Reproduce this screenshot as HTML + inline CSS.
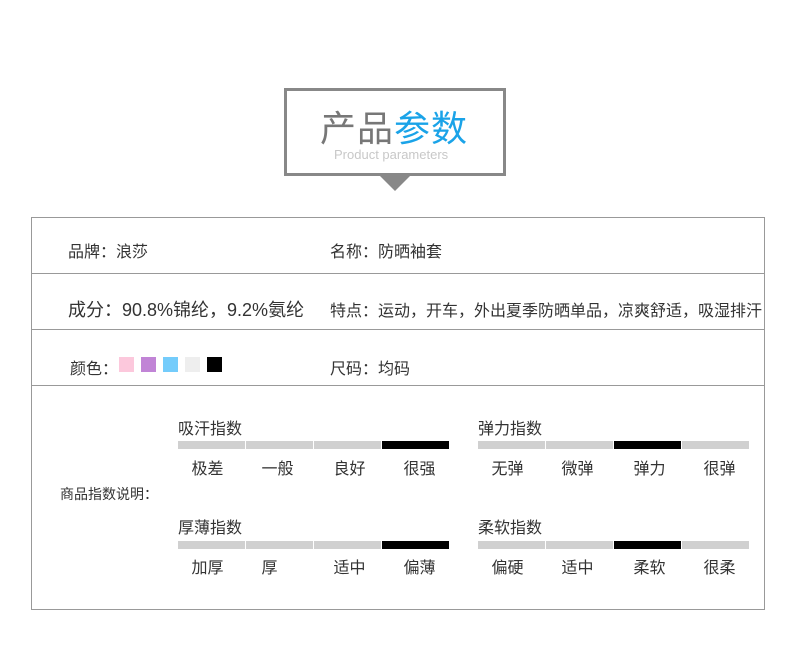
<!DOCTYPE html><html><head><meta charset="utf-8"><style>
*{margin:0;padding:0;box-sizing:border-box}
body{width:790px;height:651px;background:#fff;position:relative;font-family:"Liberation Sans","Noto Sans CJK SC",sans-serif;color:#333;overflow:hidden}
.a{position:absolute;white-space:nowrap}
.box{position:absolute;left:284px;top:88px;width:222px;height:88px;border:3px solid #888}
.tri{position:absolute;left:379px;top:175px;width:0;height:0;border-left:16px solid transparent;border-right:16px solid transparent;border-top:16px solid #888}
.tbl{position:absolute;left:31px;top:217px;width:734px;height:393px;border:1px solid #999}
.hl{position:absolute;left:31px;width:734px;height:1px;background:#999}
.t{font-size:16px}
.sw{position:absolute;top:357px;width:15px;height:15px}
.bar{position:absolute;height:8px;width:67px;background:#d0d0d0}
.lb{position:absolute;width:67px;text-align:center;font-size:16px}
</style></head><body>
<div class="box"></div>
<div class="a" style="left:320px;top:100px;font-size:36px;color:#777;letter-spacing:1px">产品<span style="color:#1aa3e8">参数</span></div>
<div class="a" style="left:334px;top:147px;font-size:13px;color:#c8c8c8">Product parameters</div>
<div class="tri"></div>
<div class="tbl"></div>
<div class="hl" style="top:273px"></div><div class="hl" style="top:329px"></div><div class="hl" style="top:385px"></div>
<div class="a t" style="left:68px;top:238px">品牌：浪莎</div>
<div class="a t" style="left:330px;top:238px">名称：防晒袖套</div>
<div class="a" style="left:68px;top:296px;font-size:18px">成分：90.8%锦纶，9.2%氨纶</div>
<div class="a t" style="left:330px;top:297px">特点：运动，开车，外出夏季防晒单品，凉爽舒适，吸湿排汗</div>
<div class="a t" style="left:70px;top:355px">颜色：</div>
<div class="sw" style="left:119px;background:#fcc8dc"></div>
<div class="sw" style="left:141px;background:#c184d6"></div>
<div class="sw" style="left:163px;background:#74ccfb"></div>
<div class="sw" style="left:185px;background:#eeeeee"></div>
<div class="sw" style="left:207px;background:#000"></div>
<div class="a t" style="left:330px;top:355px">尺码：均码</div>
<div class="a" style="left:60px;top:484px;font-size:14px">商品指数说明：</div>
<div class="a t" style="left:178px;top:415px">吸汗指数</div>
<div class="a t" style="left:478px;top:415px">弹力指数</div>
<div class="a t" style="left:178px;top:514px">厚薄指数</div>
<div class="a t" style="left:478px;top:514px">柔软指数</div>
<div class="bar" style="left:178px;top:441px"></div><div class="bar" style="left:246px;top:441px"></div><div class="bar" style="left:314px;top:441px"></div><div class="bar" style="left:382px;top:441px;background:#000"></div>
<div class="bar" style="left:478px;top:441px"></div><div class="bar" style="left:546px;top:441px"></div><div class="bar" style="left:614px;top:441px;background:#000"></div><div class="bar" style="left:682px;top:441px"></div>
<div class="bar" style="left:178px;top:541px"></div><div class="bar" style="left:246px;top:541px"></div><div class="bar" style="left:314px;top:541px"></div><div class="bar" style="left:382px;top:541px;background:#000"></div>
<div class="bar" style="left:478px;top:541px"></div><div class="bar" style="left:546px;top:541px"></div><div class="bar" style="left:614px;top:541px;background:#000"></div><div class="bar" style="left:682px;top:541px"></div>
<div class="lb" style="left:174px;top:455px">极差</div><div class="lb" style="left:244px;top:455px">一般</div><div class="lb" style="left:316px;top:455px">良好</div><div class="lb" style="left:386px;top:455px">很强</div>
<div class="lb" style="left:474px;top:455px">无弹</div><div class="lb" style="left:544px;top:455px">微弹</div><div class="lb" style="left:616px;top:455px">弹力</div><div class="lb" style="left:686px;top:455px">很弹</div>
<div class="lb" style="left:174px;top:554px">加厚</div><div class="lb" style="left:236px;top:554px">厚</div><div class="lb" style="left:316px;top:554px">适中</div><div class="lb" style="left:386px;top:554px">偏薄</div>
<div class="lb" style="left:474px;top:554px">偏硬</div><div class="lb" style="left:544px;top:554px">适中</div><div class="lb" style="left:616px;top:554px">柔软</div><div class="lb" style="left:686px;top:554px">很柔</div>
</body></html>
